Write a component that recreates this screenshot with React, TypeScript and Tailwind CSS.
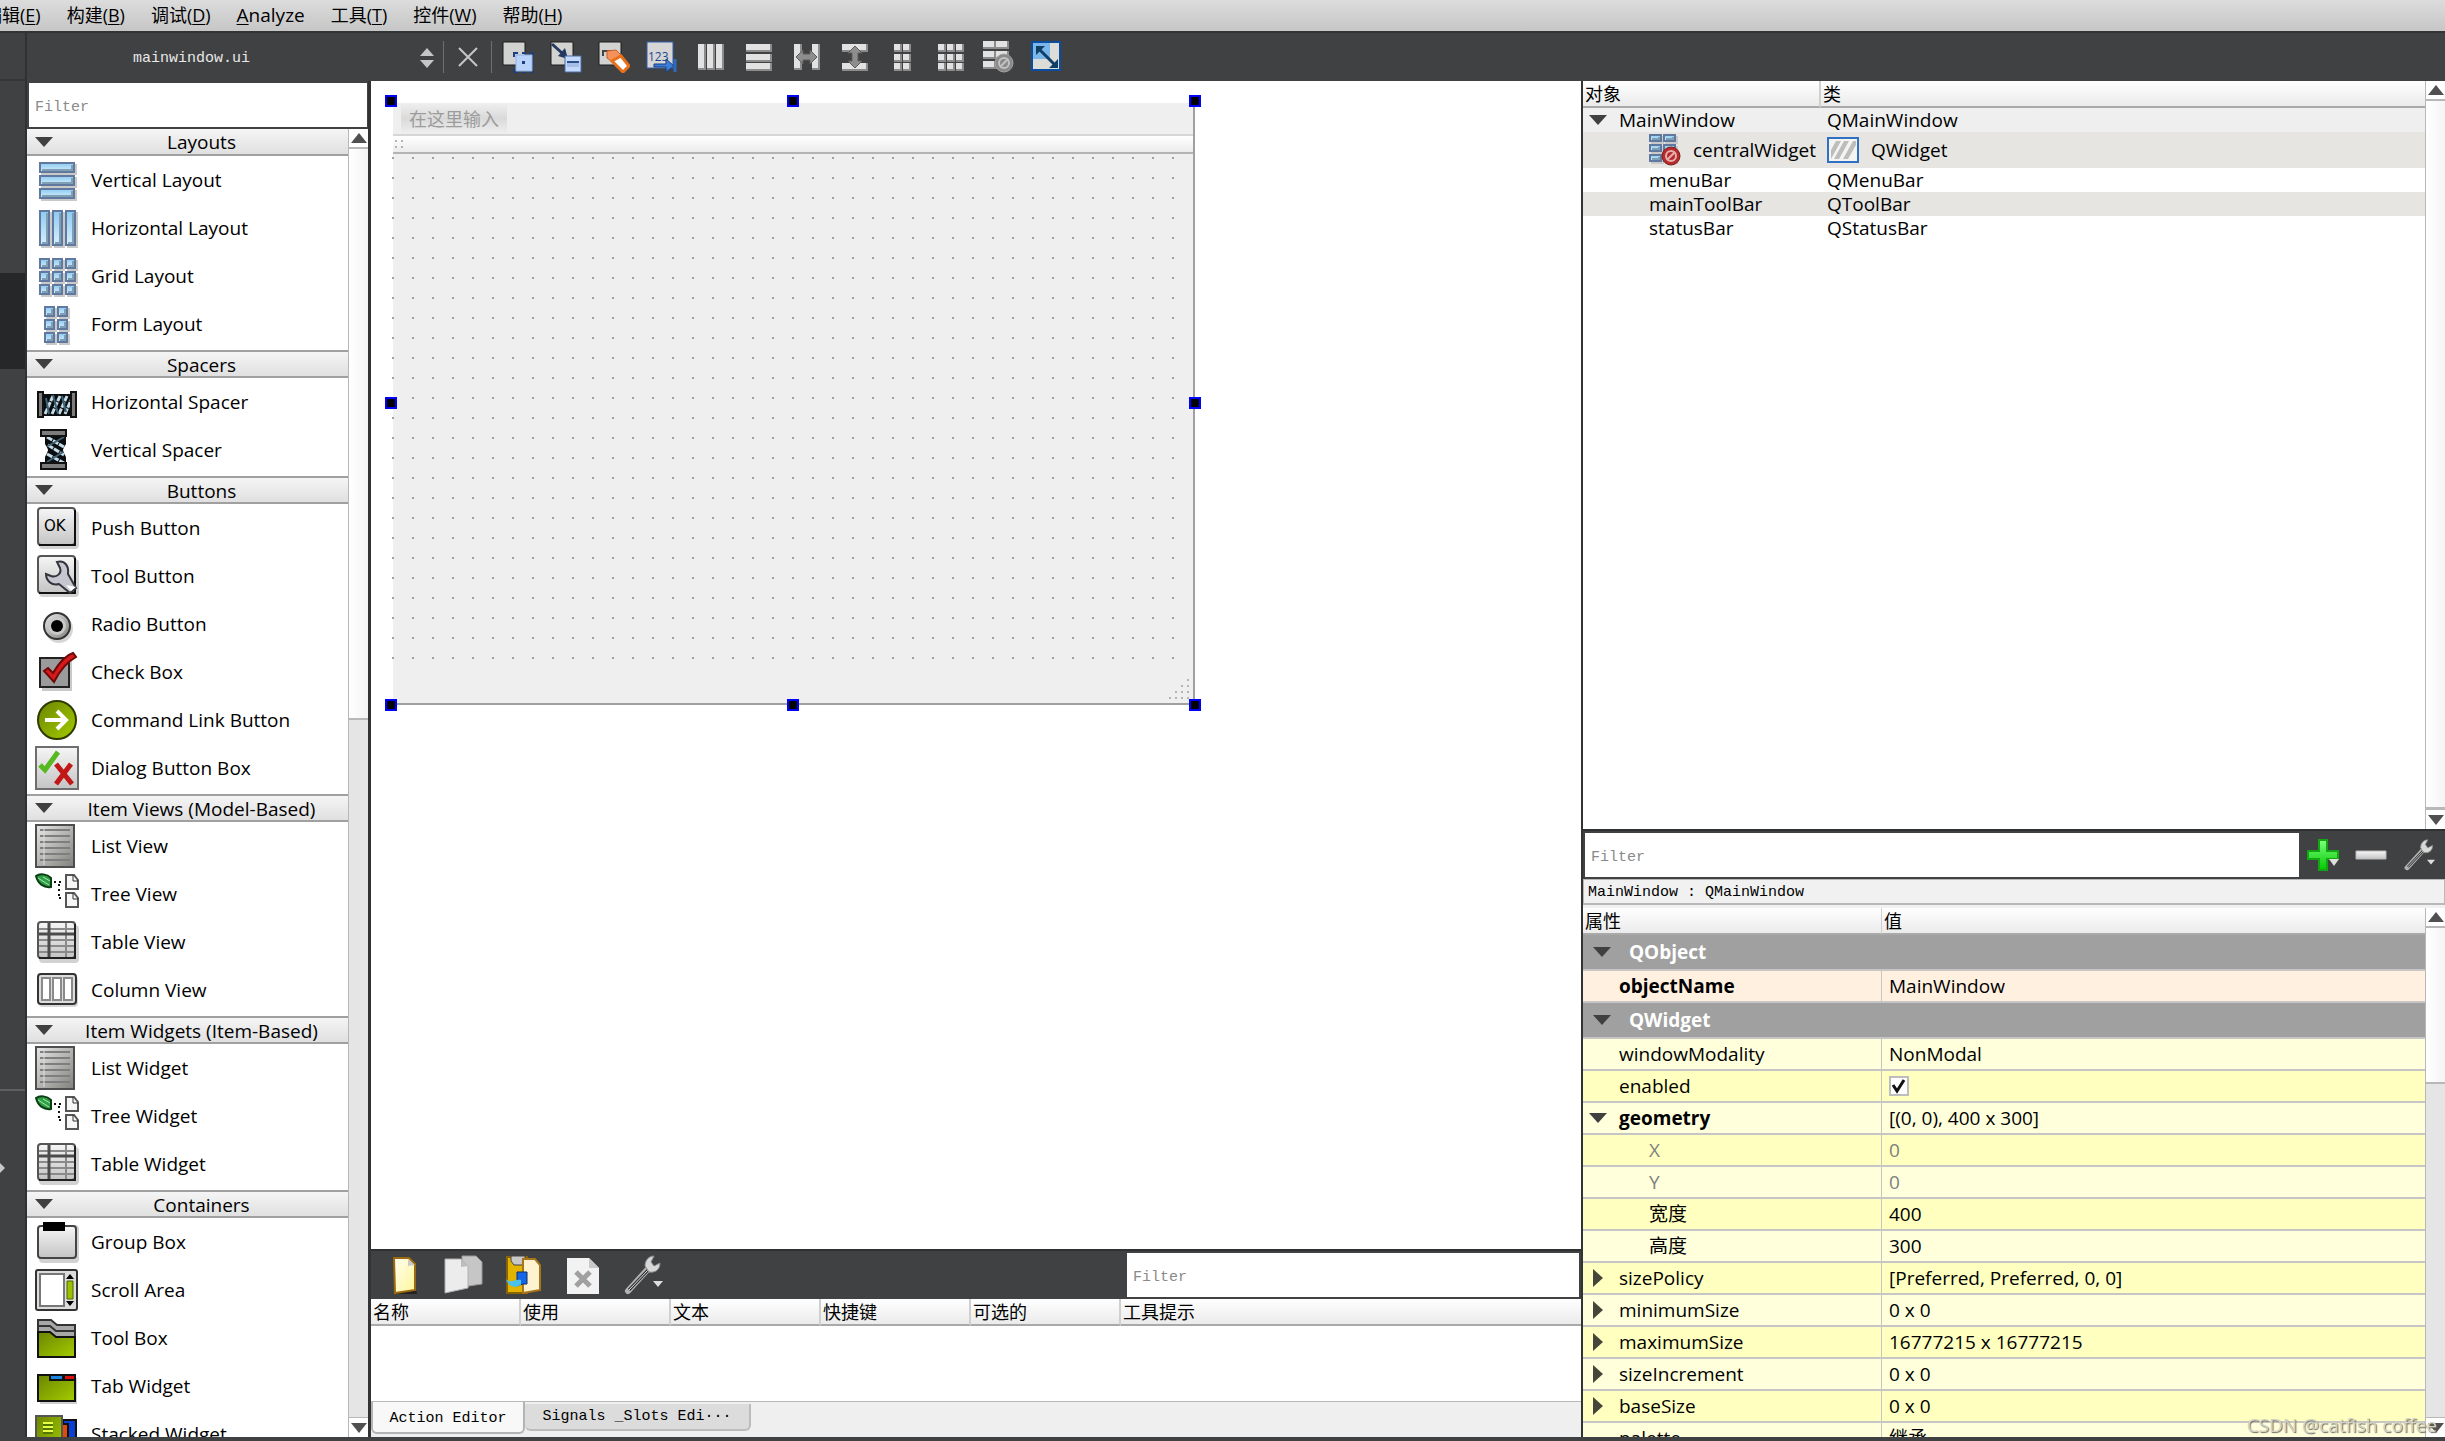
import type { ReactNode } from "react";

const MENUS = [
  { text: "编辑", key: "E" },
  { text: "构建", key: "B" },
  { text: "调试", key: "D" },
  { text: "", key: "A", rest: "nalyze" },
  { text: "工具", key: "T" },
  { text: "控件", key: "W" },
  { text: "帮助", key: "H" },
];

const PALETTE = [
  { title: "Layouts", items: ["Vertical Layout", "Horizontal Layout", "Grid Layout", "Form Layout"] },
  { title: "Spacers", items: ["Horizontal Spacer", "Vertical Spacer"] },
  {
    title: "Buttons",
    items: ["Push Button", "Tool Button", "Radio Button", "Check Box", "Command Link Button", "Dialog Button Box"],
  },
  { title: "Item Views (Model-Based)", items: ["List View", "Tree View", "Table View", "Column View"] },
  { title: "Item Widgets (Item-Based)", items: ["List Widget", "Tree Widget", "Table Widget"] },
  { title: "Containers", items: ["Group Box", "Scroll Area", "Tool Box", "Tab Widget", "Stacked Widget"] },
];

const PROPERTIES = [
  { name: "windowModality", value: "NonModal" },
  { name: "enabled", check: true },
  { name: "geometry", value: "[(0, 0), 400 x 300]", open: true, bold: true },
  { name: "X", value: "0", child: true, muted: true },
  { name: "Y", value: "0", child: true, muted: true },
  { name: "宽度", value: "400", child: true },
  { name: "高度", value: "300", child: true },
  { name: "sizePolicy", value: "[Preferred, Preferred, 0, 0]", closed: true },
  { name: "minimumSize", value: "0 x 0", closed: true },
  { name: "maximumSize", value: "16777215 x 16777215", closed: true },
  { name: "sizeIncrement", value: "0 x 0", closed: true },
  { name: "baseSize", value: "0 x 0", closed: true },
  { name: "palette", value: "继承" },
];

const HEAD = "h-[27px] border-b-2 border-[#a9a9a9] bg-linear-to-b from-white to-[#ebebeb] p-0 pt-px pl-[2px] text-left text-[18px] leading-6 font-normal";

export default function App() {
  return (
    <div className="relative flex h-screen flex-col overflow-hidden bg-[#404142] font-['Open_Sans','Noto_Sans_CJK_SC',sans-serif] text-[19px] leading-6 text-black">
      <Gradients />
      <MenuBar />
      <div className="flex min-h-0 flex-1">
        <ModeStrip />
        <div className="flex min-w-0 flex-1 flex-col">
          <ToolBar />
          <div className="flex min-h-0 flex-1">
            <WidgetBox />
            <main className="flex min-w-0 flex-1 flex-col border-l-[3px] border-[#323334]">
              <FormCanvas />
              <ActionEditor />
            </main>
            <aside className="flex w-[864px] shrink-0 flex-col border-l-2 border-[#323334]">
              <ObjectInspector />
              <PropertyEditor />
            </aside>
          </div>
        </div>
      </div>
      <div className="h-1 shrink-0 bg-[#404142]" />
      <p className="absolute right-2 bottom-1 text-[19px] text-[#d4d4c4] [text-shadow:1px_1px_1px_#6a6a60]">
        CSDN @catfish coffee
      </p>
    </div>
  );
}

function MenuBar() {
  return (
    <nav className="flex h-[33px] shrink-0 gap-[26px] border-b-2 border-[#323334] bg-linear-to-b from-[#dcdcdc] to-[#c6c6c6] text-[18px]">
      {MENUS.map((m) => (
        <button key={m.key} className="flex h-[30px] items-center whitespace-nowrap first:-ml-4">
          {m.text}
          {m.rest ? (
            <span className="text-[19px]">
              <u className="underline-offset-2">{m.key}</u>
              {m.rest}
            </span>
          ) : (
            <span>
              (<u className="underline-offset-2">{m.key}</u>)
            </span>
          )}
        </button>
      ))}
    </nav>
  );
}

function ModeStrip() {
  return (
    <div className="flex w-[27px] shrink-0 flex-col border-r-2 border-[#303132]">
      <div className="h-12 border-b-2 border-[#343536]" />
      <div className="h-48" />
      <div className="h-24 bg-[#262728]" />
      <div className="h-[722px] border-b-2 border-[#5e5f60]" />
      <svg viewBox="0 0 6 12" className="mt-[71px] h-3 w-[6px]">
        <path d="M0 1 5 6 0 11z" fill="#c8c8c8" />
      </svg>
    </div>
  );
}

function ToolBar() {
  return (
    <div className="flex h-12 shrink-0 items-center">
      <div className="relative">
        <select
          aria-label="Open document"
          className="h-12 w-[414px] appearance-none bg-transparent pt-1 pl-[106px] font-['Liberation_Mono',monospace] text-[15px] text-[#e8e8e8]"
        >
          <option>mainwindow.ui</option>
        </select>
        <svg viewBox="0 0 14 22" className="pointer-events-none absolute top-[14px] left-[393px] h-[22px] w-[14px]">
          <path d="M0 9 7 1 14 9zM0 13 7 21 14 13z" fill="#c6c6c6" />
        </svg>
      </div>
      <span className="ml-[2px] h-8 w-px bg-[#6e6f70]" />
      <button aria-label="Close document" className="grid h-12 w-[47px] place-items-center">
        <svg viewBox="0 0 20 20" className="size-5">
          <path d="M1 1 19 19M19 1 1 19" stroke="#c6c6c6" strokeWidth="2" />
        </svg>
      </button>
      <span className="mr-[2px] h-8 w-px bg-[#6e6f70]" />
      {TOOLS.map((t) => (
        <button key={t.label} aria-label={t.label} className="grid size-12 place-items-center">
          <svg viewBox="0 0 32 32" className="size-8">
            {t.icon}
          </svg>
        </button>
      ))}
    </div>
  );
}

function WidgetBox() {
  return (
    <div className="flex w-[341px] shrink-0 flex-col">
      <div className="h-12 shrink-0 p-[2px] pr-px">
        <Filter label="Filter widgets" />
      </div>
      <div className="flex min-h-0 flex-1 bg-white">
        <div className="min-w-0 flex-1 overflow-hidden">
          {PALETTE.map((group, i) => (
            <section key={group.title}>
              <div className={i === 0 ? "h-[27px]" : "h-[30px] pt-[2px]"}>
                <button
                  className={
                    "flex w-full items-center border-b-2 border-[#a0a0a0] bg-linear-to-b from-[#f5f5f5] to-[#e0e0e0] pl-2 " +
                    (i === 0 ? "h-[27px]" : "h-7 border-t-2")
                  }
                >
                  <Down />
                  <span className="flex-1 pt-px pl-[2px]">{group.title}</span>
                </button>
              </div>
              {group.items.map((name) => (
                <button key={name} className="flex h-12 w-full items-center gap-3 pl-2 text-left">
                  <svg viewBox="0 0 44 44" className="size-11">
                    {WIDGET_ICONS[name] ?? WIDGET_ICONS[name.replace("Widget", "View")]}
                  </svg>
                  <span>{name}</span>
                </button>
              ))}
            </section>
          ))}
        </div>
        <ScrollBar thumb={45} />
      </div>
    </div>
  );
}

function FormCanvas() {
  return (
    <div className="min-h-0 flex-1 bg-white px-[22px] pt-[22px]">
      <div className="relative flex h-[602px] w-[802px] flex-col border-r-2 border-b-2 border-[#a0a0a0] bg-[#efefef]">
        <div className="flex h-[33px] shrink-0 border-b-2 border-[#d6d6d6] pl-2">
          <button className="h-[31px] w-[106px] bg-linear-to-b from-[#efefef] via-[#dadada] to-[#efefef] text-[18px] text-[#9c9c9c]">
            在这里输入
          </button>
        </div>
        <div className="h-[18px] shrink-0 border-b-2 border-[#b4b4b4] bg-linear-to-b from-white to-[#ececec] pt-1">
          <div className="ml-[2px] h-3 w-[9px] bg-[conic-gradient(from_270deg_at_2px_2px,#b4b4b4_90deg,transparent_0)] bg-[length:6px_6px]" />
        </div>
        <div className="mt-[3px] ml-[-1px] h-[502px] w-[783px] bg-[conic-gradient(from_270deg_at_2px_2px,#a0a0a0_90deg,transparent_0)] bg-[length:20px_20px]" />
        <svg viewBox="0 0 20 20" className="absolute right-1 bottom-1 size-5" fill="#b4b4b4">
          <path d="M18 0h2v2h-2zM12 6h2v2h-2zM18 6h2v2h-2zM6 12h2v2H6zM12 12h2v2h-2zM18 12h2v2h-2zM0 18h2v2H0zM6 18h2v2H6zM12 18h2v2h-2zM18 18h2v2h-2z" />
        </svg>
        <Handle place="-top-2 -left-2" />
        <Handle place="-top-2 left-1/2 -ml-[6px]" />
        <Handle place="-top-2 -right-2" />
        <Handle place="top-1/2 -mt-[6px] -left-2" />
        <Handle place="top-1/2 -mt-[6px] -right-2" />
        <Handle place="-bottom-2 -left-2" />
        <Handle place="-bottom-2 left-1/2 -ml-[6px]" />
        <Handle place="-bottom-2 -right-2" />
      </div>
    </div>
  );
}

function Handle({ place }: { place: string }) {
  return <span className={"absolute size-3 border-2 border-[#0000ff] bg-black " + place} />;
}

function ActionEditor() {
  return (
    <div className="flex h-[188px] shrink-0 flex-col">
      <div className="flex h-[50px] shrink-0 items-center border-t-2 border-[#303132] pl-[2px]">
        {ACTIONS.map((a) => (
          <button key={a.label} aria-label={a.label} className="grid h-12 w-[60px] place-items-center">
            <svg viewBox="0 0 44 40" className="h-10 w-11">
              {a.icon}
            </svg>
          </button>
        ))}
        <div className="mr-[2px] ml-auto h-11 w-[452px]">
          <Filter label="Filter actions" />
        </div>
      </div>
      <div className="flex-1 bg-white">
        <table className="w-full table-fixed border-separate border-spacing-0">
          <thead>
            <tr>
              {["名称", "使用", "文本", "快捷键", "可选的"].map((h) => (
                <th key={h} className={HEAD + " w-[150px] border-r-2 border-r-[#d0d0d0]"}>
                  {h}
                </th>
              ))}
              <th className={HEAD}>工具提示</th>
            </tr>
          </thead>
        </table>
      </div>
      <div className="flex h-9 shrink-0 items-start border-t border-[#b8b8b8] bg-[#efefef] font-['Liberation_Mono',monospace] text-[15px]">
        <button className="h-8 w-[154px] rounded-b-md border-x-2 border-b-2 border-[#b4b4b4] bg-[#f8f8f8] pt-1">
          Action Editor
        </button>
        <button className="mt-[2px] h-[27px] w-[226px] rounded-b-md border-r-2 border-b-2 border-[#bcbcbc] bg-[#dcdcdc] leading-5">
          Signals _Slots Edi···
        </button>
      </div>
    </div>
  );
}

function ObjectInspector() {
  return (
    <div className="flex min-h-0 flex-1 bg-white">
      <div className="min-w-0 flex-1">
        <table className="w-full table-fixed border-separate border-spacing-0">
          <thead>
            <tr>
              <th className={HEAD + " w-[238px] border-r-2 border-r-[#d0d0d0]"}>对象</th>
              <th className={HEAD}>类</th>
            </tr>
          </thead>
          <tbody>
            <tr className="h-6 bg-[#efefef]">
              <td className="p-0">
                <div className="flex items-center gap-3 pl-[6px]">
                  <Down />
                  MainWindow
                </div>
              </td>
              <td className="p-0 pl-[6px]">QMainWindow</td>
            </tr>
            <tr className="h-9 bg-[#e6e5e1]">
              <td className="p-0">
                <div className="flex items-center gap-3 pl-[66px]">
                  <svg viewBox="0 0 32 32" className="size-8 shrink-0">
                    <Tiles cols={[0, 14]} rows={[0, 10, 20]} w={13} h={8} />
                    <circle cx="22" cy="22" r="9" fill="#b82b2b" stroke="#7d1f1f" />
                    <circle cx="22" cy="22" r="5" fill="none" stroke="#e6b0b0" strokeWidth="2" />
                    <path d="M18 26 26 18" stroke="#e6b0b0" strokeWidth="2" />
                  </svg>
                  centralWidget
                </div>
              </td>
              <td className="p-0">
                <div className="flex items-center gap-3 pl-[6px]">
                  <svg viewBox="0 0 32 26" className="h-[26px] w-8">
                    <path d="M1 1H31V25H1z" fill="#f4f4f2" stroke="#2f6fc4" strokeWidth="2" />
                    <path d="M4 13 9 4h5L4 22zM7 22 17 4h5L12 22zM16 22 26 4h3v4l-8 14z" fill="#bdbdbb" />
                  </svg>
                  QWidget
                </div>
              </td>
            </tr>
            {["menuBar", "mainToolBar", "statusBar"].map((name, i) => (
              <tr key={name} className={i === 1 ? "h-6 bg-[#e6e5e1]" : "h-6"}>
                <td className="p-0 pl-[66px]">{name}</td>
                <td className="p-0 pl-[6px]">{["QMenuBar", "QToolBar", "QStatusBar"][i]}</td>
              </tr>
            ))}
          </tbody>
        </table>
      </div>
      <ScrollBar thumb={100} />
    </div>
  );
}

function PropertyEditor() {
  return (
    <div className="flex h-[608px] shrink-0 flex-col">
      <div className="flex h-[50px] shrink-0 items-center border-t-2 border-[#303132] px-[2px]">
        <div className="h-11 flex-1">
          <Filter label="Filter properties" />
        </div>
        <button aria-label="Add dynamic property" className="grid h-12 w-12 place-items-center">
          <svg viewBox="0 0 32 32" className="size-8">
            <path d="M12 1h8v11h11v8H20v11h-8V20H1v-8h11z" fill="url(#green)" stroke="#14a514" strokeWidth="2" />
            <path d="M22 20h10l-5 7z" fill="#dedede" />
          </svg>
        </button>
        <button aria-label="Remove dynamic property" className="grid h-12 w-12 place-items-center">
          <svg viewBox="0 0 32 32" className="size-8">
            <path d="M1 12H31V20H1z" fill="url(#silver)" stroke="#b8b8b8" />
          </svg>
        </button>
        <button aria-label="Configure" className="grid h-12 w-12 place-items-center">
          <svg viewBox="0 0 44 40" className="h-8 w-9">
            <Wrench />
          </svg>
        </button>
      </div>
      <div className="shrink-0 bg-[#f1f1f1] pb-[3px]">
        <div className="h-[26px] border border-b-2 border-[#b8b8b8] pt-[3px] pl-1 font-['Liberation_Mono',monospace] text-[15px] leading-5">
          MainWindow : QMainWindow
        </div>
      </div>
      <div className="flex min-h-0 flex-1 bg-white">
        <div className="min-w-0 flex-1 overflow-hidden">
          <table className="w-full table-fixed border-separate border-spacing-0">
            <thead>
              <tr>
                <th className={HEAD + " w-[299px] border-r border-r-[#d0d0d0]"}>属性</th>
                <th className={HEAD}>值</th>
              </tr>
            </thead>
            <tbody>
              <GroupRow name="QObject" />
              <tr className="h-8 bg-[#fff0e0]">
                <td className="border-r border-b-2 border-[#c6c6c6] p-0 pl-9 font-bold">objectName</td>
                <td className="border-b-2 border-[#c6c6c6] p-0 pl-[7px]">MainWindow</td>
              </tr>
              <GroupRow name="QWidget" />
              {PROPERTIES.map((p, i) => (
                <tr
                  key={p.name}
                  className={(i % 2 ? "bg-[#ffffbf]" : "bg-[#ffffdc]") + (p.muted ? " h-8 text-[#808080]" : " h-8")}
                >
                  <td className="border-r border-b-2 border-[#c6c6c6] p-0">
                    <div className={"flex items-center gap-3 " + (p.child ? "pl-[66px]" : "pl-[6px]")}>
                      {p.open && <Down />}
                      {p.closed && (
                        <svg viewBox="0 0 18 18" className="size-[18px]">
                          <path d="M4 0 14 9 4 18z" fill="#45453a" />
                        </svg>
                      )}
                      {!p.open && !p.closed && !p.child && <span className="w-[18px]" />}
                      <span className={p.bold ? "font-bold" : ""}>{p.name}</span>
                    </div>
                  </td>
                  <td className="border-b-2 border-[#c6c6c6] p-0 pl-[7px]">
                    {p.check ? (
                      <label className="grid w-5">
                        <input
                          type="checkbox"
                          defaultChecked
                          aria-label="enabled"
                          className="col-start-1 row-start-1 size-5 appearance-none border-2 border-[#bdbdbd] bg-white"
                        />
                        <svg viewBox="0 0 20 20" className="pointer-events-none col-start-1 row-start-1 size-5">
                          <path d="M4 9 8 15 15 4" fill="none" stroke="#111" strokeWidth="3" />
                        </svg>
                      </label>
                    ) : (
                      p.value
                    )}
                  </td>
                </tr>
              ))}
            </tbody>
          </table>
        </div>
        <ScrollBar thumb={32} />
      </div>
    </div>
  );
}

function GroupRow({ name }: { name: string }) {
  return (
    <tr className="h-9 bg-[#a0a0a0] font-bold text-white">
      <td colSpan={2} className="border-b-2 border-[#c6c6c6] p-0">
        <div className="flex items-center gap-[18px] pl-[10px]">
          <Down />
          {name}
        </div>
      </td>
    </tr>
  );
}

function Filter({ label }: { label: string }) {
  return (
    <input
      aria-label={label}
      placeholder="Filter"
      className="block h-full w-full bg-white px-[6px] pt-1 font-['Liberation_Mono',monospace] text-[15px] placeholder:text-[#8a8a8a]"
    />
  );
}

function Down() {
  return (
    <svg viewBox="0 0 18 10" className="h-[10px] w-[18px] shrink-0">
      <path d="M0 0H18L9 10z" fill="#404040" />
    </svg>
  );
}

function ScrollBar({ thumb }: { thumb: number }) {
  return (
    <div className="flex w-5 shrink-0 flex-col border-l border-[#b8b8b8] bg-white">
      <button aria-label="Scroll up" className="grid h-5 shrink-0 place-items-center border-b-2 border-[#b8b8b8]">
        <svg viewBox="0 0 16 10" className="h-[10px] w-4">
          <path d="M0 10 8 0 16 10z" fill="#505050" />
        </svg>
      </button>
      <div className="min-h-0 flex-1 bg-[#e5e5e5]">
        <div className="border-b-2 border-[#b8b8b8] bg-linear-to-r from-white to-[#f4f4f4]" style={{ height: thumb + "%" }} />
      </div>
      <button aria-label="Scroll down" className="grid h-5 shrink-0 place-items-center border-t border-[#b8b8b8]">
        <svg viewBox="0 0 16 10" className="h-[10px] w-4">
          <path d="M0 0H16L8 10z" fill="#505050" />
        </svg>
      </button>
    </div>
  );
}

function Gradients() {
  return (
    <svg className="absolute size-0">
      <defs>
        <linearGradient id="blue" x2="0" y2="1">
          <stop offset="0" stopColor="#8ccbf2" />
          <stop offset="1" stopColor="#d8effc" />
        </linearGradient>
        <linearGradient id="silver" x2="0" y2="1">
          <stop offset="0" stopColor="#f6f6f6" />
          <stop offset="1" stopColor="#c4c4c4" />
        </linearGradient>
        <linearGradient id="steel" x2="1" y2="1">
          <stop offset="0" stopColor="#e8e8e8" />
          <stop offset="1" stopColor="#80807c" />
        </linearGradient>
        <linearGradient id="lime" x2="1" y2="1">
          <stop offset="0" stopColor="#6b8500" />
          <stop offset="1" stopColor="#a4cc00" />
        </linearGradient>
        <linearGradient id="green" x2="0" y2="1">
          <stop offset="0" stopColor="#7dff7d" />
          <stop offset="1" stopColor="#00c800" />
        </linearGradient>
        <linearGradient id="paper" x2="1" y2="1">
          <stop offset="0" stopColor="#fffdf0" />
          <stop offset="1" stopColor="#fff79a" />
        </linearGradient>
      </defs>
    </svg>
  );
}

type Grid = { cols: number[]; rows: number[]; w: number; h: number };

// Blue bevelled tiles of the layout icons
function Tiles({ cols, rows, w, h }: Grid) {
  return rows.flatMap((y) =>
    cols.map((x) => (
      <g key={x + "-" + y}>
        <rect x={x + 2} y={y + 2} width={w} height={h} fill="#c9c9c9" />
        <rect x={x + 1} y={y + 1} width={w - 2} height={h - 2} fill="url(#blue)" stroke="#61799f" strokeWidth="2" />
        <path d={`M${x + 3} ${y + h - 3}H${x + w - 3}V${y + 3}`} fill="none" stroke="#7f9fb4" strokeWidth="2" />
      </g>
    ))
  );
}

// Grey bars of the toolbar layout icons
function Bars({ cols, rows, w, h }: Grid) {
  return rows.flatMap((y) =>
    cols.map((x) => (
      <g key={x + "-" + y}>
        <rect x={x} y={y} width={w} height={h} fill="#8c8c8c" />
        <rect x={x} y={y} width={w - 2} height={h - 2} fill="#e2e2e2" />
      </g>
    ))
  );
}

function Wrench() {
  return (
    <>
      <path d="M7 36 27 14" stroke="#b4b4b4" strokeWidth="6" strokeLinecap="round" />
      <path d="M8 35 27 15" stroke="#303030" strokeWidth="3" />
      <path d="M8 35 27 15" stroke="#e0e0e0" strokeWidth="1" />
      <path d="M24 11c0-6 4-10 9-10l-3 6 3 4 6-3c0 7-5 10-11 9z" fill="#d8d8d8" stroke="#8a8a8a" />
      <path d="M32 26h10l-5 6z" fill="#dedede" />
    </>
  );
}

const BackSheet = <path d="M1 1H23V24H1z" fill="#d2d2d0" stroke="#1c1c1c" />;

const TOOLS: { label: string; icon: ReactNode }[] = [
  {
    label: "Edit Widgets",
    icon: (
      <>
        {BackSheet}
        <path d="M14 14H30V30H14z" fill="#b9d3fb" stroke="#8fb4ee" />
        <path d="M12 16V12h4M20 12h4M28 12h4v4M32 20v4M32 28v4h-4M24 32h-4M16 32h-4v-4" fill="none" stroke="#1d3f80" strokeWidth="2" />
        <path d="M20 20h3v3h-3z" fill="#1d3f80" />
      </>
    ),
  },
  {
    label: "Edit Signals/Slots",
    icon: (
      <>
        {BackSheet}
        <path d="M2 3 12 12" stroke="#24395f" strokeWidth="3" />
        <path d="M18 18 8 15 15 7z" fill="#24395f" />
        <path d="M15 15H31V31H15z" fill="#c4dafd" stroke="#4a6ca8" />
        <path d="M17 21H29V26H17z" fill="#a6bfe8" />
        <path d="M17 21H29" stroke="#2c4f8e" strokeWidth="2" />
      </>
    ),
  },
  {
    label: "Edit Buddies",
    icon: (
      <>
        {BackSheet}
        <path d="M5 15v-5h9" fill="none" stroke="#444" strokeWidth="2" />
        <path d="M9 10 18 9 25 16 16 22 9 17z" fill="#f5915a" stroke="#c85f20" />
        <path d="M14 20 23 15 31 25 25 31z" fill="#fff" stroke="#e8701a" strokeWidth="3" />
      </>
    ),
  },
  {
    label: "Edit Tab Order",
    icon: (
      <>
        <path d="M1 1H27V27H1z" fill="#d6d6d6" stroke="#345fa8" />
        <text x="2" y="20" fontSize="12" fontFamily="Open Sans" fill="#1b4791">
          123
        </text>
        <path d="M8 23h12v-5l8 7-8 6v-5H8z" fill="#3e7fd6" stroke="#173f83" />
        <path d="M29 18v13" stroke="#2e6cc2" strokeWidth="3" />
      </>
    ),
  },
  { label: "Lay Out Horizontally", icon: <Bars cols={[4, 13, 22]} rows={[3]} w={8} h={26} /> },
  { label: "Lay Out Vertically", icon: <Bars cols={[4]} rows={[3, 13, 22]} w={26} h={8} /> },
  {
    label: "Horizontal Splitter",
    icon: (
      <>
        <Bars cols={[4, 22]} rows={[3]} w={8} h={26} />
        <path d="M6 16 13 9v4h7V9l7 7-7 7v-4h-7v4z" fill="#8e8e8e" stroke="#5c5c5c" />
      </>
    ),
  },
  {
    label: "Vertical Splitter",
    icon: (
      <>
        <Bars cols={[4]} rows={[3, 22]} w={26} h={8} />
        <path d="M17 5 24 12h-4v8h4l-7 7-7-7h4v-8h-4z" fill="#8e8e8e" stroke="#5c5c5c" />
      </>
    ),
  },
  { label: "Lay Out in a Form", icon: <Bars cols={[8, 17]} rows={[3, 13, 22]} w={8} h={8} /> },
  { label: "Lay Out in a Grid", icon: <Bars cols={[4, 13, 22]} rows={[3, 13, 22]} w={8} h={8} /> },
  {
    label: "Break Layout",
    icon: (
      <>
        <Bars cols={[1, 14]} rows={[0, 10, 20]} w={13} h={8} />
        <circle cx="22" cy="22" r="9" fill="#8a8a8a" stroke="#a2a2a2" />
        <circle cx="22" cy="22" r="5" fill="none" stroke="#c2c2c2" strokeWidth="2" />
        <path d="M18 26 26 18" stroke="#c2c2c2" strokeWidth="2" />
      </>
    ),
  },
  {
    label: "Adjust Size",
    icon: (
      <>
        <path d="M2 1H30V29H2z" fill="#dcdcd8" stroke="#0b4da0" strokeWidth="2" />
        <path d="M3 2H20V18H3z" fill="#79b7ea" />
        <path d="M10 9 24 23" stroke="#103f66" strokeWidth="3" />
        <path d="M6 5h9l-9 9zM28 27h-9l9-9z" fill="#103f66" />
      </>
    ),
  },
];

const ACTIONS: { label: string; icon: ReactNode }[] = [
  {
    label: "New action",
    icon: (
      <>
        <path d="M14 39h22l-1-4z" fill="#222" />
        <path d="M13 3h15l6 6v26l-20 3z" fill="url(#paper)" stroke="#9a6a10" strokeWidth="2" />
        <path d="M27 4v7l7-1z" fill="#c9c9c9" />
      </>
    ),
  },
  {
    label: "Copy action",
    icon: (
      <>
        <path d="M21 1h14l6 6v22l-20 3z" fill="#c6c6c6" stroke="#9a9a9a" />
        <path d="M4 4h16l7 7v22L4 38z" fill="#ececec" stroke="#b0b0b0" />
        <path d="M20 4v8l7-1z" fill="#bdbdbd" />
      </>
    ),
  },
  {
    label: "Paste action",
    icon: (
      <>
        <path d="M6 2h20v36H6z" fill="#e2b400" stroke="#8a6400" strokeWidth="2" />
        <path d="M10 1h14v5l-3 4h-8l-3-4z" fill="#c8c8c8" stroke="#444" />
        <path d="M22 4h12l5 6v25l-17 3z" fill="#fff3cf" stroke="#a8761a" strokeWidth="2" />
        <path d="M16 17h10v12h-4l-6 2z" fill="#1467e8" stroke="#0c2f66" />
        <path d="M5 24c5 5 8 0 15 1v5c-8 4-13 1-15-6z" fill="#4cc2e8" />
      </>
    ),
  },
  {
    label: "Delete action",
    icon: (
      <>
        <path d="M6 3h22l10 10v26H6z" fill="#f2f2f2" />
        <path d="M28 3v10h10z" fill="#c9c9c9" />
        <path d="M15 17 29 31M29 17 15 31" stroke="#a0a0a0" strokeWidth="5" />
      </>
    ),
  },
  { label: "Configure actions", icon: <Wrench /> },
];

const Shadow = <rect x="4" y="5" width="40" height="38" rx="4" fill="#d2d2d2" />;

const WIDGET_ICONS: Record<string, ReactNode> = {
  "Vertical Layout": <Tiles cols={[4]} rows={[4, 17, 30]} w={36} h={11} />,
  "Horizontal Layout": <Tiles cols={[4, 17, 30]} rows={[4]} w={11} h={36} />,
  "Grid Layout": <Tiles cols={[4, 17, 30]} rows={[4, 17, 30]} w={11} h={11} />,
  "Form Layout": <Tiles cols={[9, 22]} rows={[4, 17, 30]} w={11} h={11} />,
  "Horizontal Spacer": (
    <>
      <path d="M8 14H37V36H8z" fill="#0a0d10" />
      <path d="M10 34 18 16M17 34 25 16M24 34 32 16M30 34 36 20" stroke="#c4dbe8" strokeWidth="3" strokeDasharray="6 1" />
      <path d="M11 18 14 34M18 15 23 34M27 16 31 32" stroke="#3f6375" strokeWidth="2" />
      <path d="M3 12H8V37H3zM36 12H41V37H36z" fill="#7c7c7c" stroke="#111" strokeWidth="2" />
    </>
  ),
  "Vertical Spacer": (
    <>
      <path d="M10 8H31V36H10z" fill="#0a0d10" />
      <path d="M9 12c0 4 4 8 4 10s-3 6-4 10zM32 12c0 4-4 8-4 10s3 6 4 10z" fill="#fff" />
      <path d="M12 9 29 19M13 17 29 27M12 26 29 35" stroke="#c4dbe8" strokeWidth="3" strokeDasharray="6 1" />
      <path d="M29 9 13 18M28 24 12 34" stroke="#3f6375" strokeWidth="2" />
      <path d="M6 2H31V8H6zM6 35H31V41H6z" fill="#7c7c7c" stroke="#111" strokeWidth="2" />
    </>
  ),
  "Push Button": (
    <>
      {Shadow}
      <rect x="3" y="2" width="37" height="37" rx="3" fill="url(#silver)" stroke="#555" strokeWidth="2" />
      <path d="M4 39H40V4" fill="none" stroke="#111" strokeWidth="2" />
      <text x="9" y="25" fontSize="15" fontFamily="DejaVu Sans" fill="#000">
        OK
      </text>
    </>
  ),
  "Tool Button": (
    <>
      {Shadow}
      <rect x="3" y="2" width="37" height="37" rx="3" fill="url(#silver)" stroke="#555" strokeWidth="2" />
      <path d="M4 39H40V4" fill="none" stroke="#111" strokeWidth="2" />
      <path
        d="M22 8c8-2 12 4 11 12l8 14-6 5-11-9c-7 2-13-3-13-10l5 2c6 2 11-3 9-8z"
        fill="#c6c6d0"
        stroke="#33343c"
        strokeWidth="2"
      />
      <path d="M31 31 36 37 41 33z" fill="#fff" />
    </>
  ),
  "Radio Button": (
    <>
      <circle cx="24" cy="27" r="14" fill="#d6d6d6" />
      <circle cx="22" cy="24" r="13" fill="url(#steel)" stroke="#333" strokeWidth="2" />
      <circle cx="22" cy="24" r="9" fill="#c9c9c9" />
      <circle cx="22" cy="24" r="6" fill="#000" />
    </>
  ),
  "Check Box": (
    <>
      <path d="M7 10H37V41H7z" fill="#c9c9c9" />
      <path d="M5 8H34V37H5z" fill="#9b9b9b" stroke="#222" strokeWidth="2" />
      <path d="M9 21 13 18 18 23C24 13 31 5 38 3l3 4C32 12 24 22 19 32z" fill="#d61a1a" stroke="#6d0808" strokeWidth="2" />
    </>
  ),
  "Command Link Button": (
    <>
      <circle cx="22" cy="22" r="19" fill="url(#lime)" stroke="#2e3a00" strokeWidth="2" />
      <path d="M10 22H31M22 13 31 22 22 31" fill="none" stroke="#fff" strokeWidth="4" />
    </>
  ),
  "Dialog Button Box": (
    <>
      <path d="M1 1H43V43H1z" fill="url(#silver)" stroke="#6e6e6e" strokeWidth="2" />
      <path d="M5 19 10 24 23 6" fill="none" stroke="#58b820" strokeWidth="5" />
      <path d="M21 18 37 38M36 18 21 38" stroke="#c21717" strokeWidth="5" />
    </>
  ),
  "List View": (
    <>
      <path d="M1 1H39V43H1z" fill="url(#steel)" stroke="#4e4e4e" strokeWidth="2" />
      <path d="M5 6h30M5 12h30M5 18h30M5 24h30M5 30h30M5 36h30" stroke="#7e7e7e" strokeWidth="2" />
      <path d="M9 4v37" stroke="#dedede" />
    </>
  ),
  "Tree View": (
    <>
      <path d="M1 4c4-3 11-2 15 2v9C9 16 3 12 1 4z" fill="#2ea043" stroke="#0d3d16" strokeWidth="2" />
      <path d="M3 6 14 13M8 5 15 9" stroke="#a8e6b0" strokeWidth="1" />
      <path d="M19 10H29M24 12V26M24 26H29" fill="none" stroke="#111" strokeWidth="2" strokeDasharray="2 3" />
      <path d="M31 3h8l4 5v9H31zM31 21h8l4 5v9H31z" fill="#f6f6f6" stroke="#555" strokeWidth="2" />
      <path d="M38 3v6h5M38 21v6h5" fill="none" stroke="#333" />
    </>
  ),
  "Table View": (
    <>
      {Shadow}
      <rect x="3" y="2" width="37" height="36" rx="3" fill="url(#silver)" stroke="#555" strokeWidth="2" />
      <path d="M4 9H39M4 20H39M4 26H39M4 32H39M31 3V38" stroke="#8a8a8a" strokeWidth="2" />
      <path d="M4 14H39M14 3V38" stroke="#4c4c4c" strokeWidth="3" />
      <path d="M4 38H40V4" fill="none" stroke="#222" strokeWidth="2" />
    </>
  ),
  "Column View": (
    <>
      <rect x="4" y="8" width="39" height="31" rx="4" fill="#d6d6d6" />
      <rect x="3" y="6" width="38" height="30" rx="3" fill="#dcdcdc" stroke="#333" strokeWidth="2" />
      <path d="M7 10H15V32H7zM18 10H26V32H18zM29 10H37V32H29z" fill="#fff" stroke="#8a8a8a" strokeWidth="2" />
    </>
  ),
  "Group Box": (
    <>
      {Shadow}
      <rect x="3" y="6" width="38" height="32" rx="3" fill="url(#silver)" stroke="#444" strokeWidth="2" />
      <path d="M8 2H30V11H8z" fill="#000" />
    </>
  ),
  "Scroll Area": (
    <>
      <rect x="1" y="2" width="41" height="40" rx="2" fill="#dcdcdc" stroke="#333" strokeWidth="2" />
      <path d="M5 6H29V38H5z" fill="#fff" stroke="#777" strokeWidth="2" />
      <path d="M32 13H38V31H32z" fill="#9ac000" stroke="#4f6600" />
      <path d="M31 11 35 6 39 11zM31 33 35 38 39 33z" fill="#000" />
    </>
  ),
  "Tool Box": (
    <>
      <path d="M3 4H16L22 9H40V22H3z" fill="#a8a8a8" stroke="#333" strokeWidth="2" />
      <path d="M3 10H15L21 15H40" fill="none" stroke="#333" strokeWidth="2" />
      <path d="M3 16H15L21 21H40V41H3z" fill="url(#lime)" stroke="#111" strokeWidth="2" />
    </>
  ),
  "Tab Widget": (
    <>
      <path d="M5 14H42V40H5z" fill="#cfcfcf" />
      <path d="M3 11H40V37H3z" fill="url(#lime)" stroke="#111" strokeWidth="2" />
      <path d="M15 11H28V16H15z" fill="#1b86e0" stroke="#111" strokeWidth="2" />
      <path d="M29 11H40V16H29z" fill="#e01010" stroke="#111" strokeWidth="2" />
    </>
  ),
  "Stacked Widget": (
    <>
      <path d="M28 8H41V43H28z" fill="#0a3fd0" stroke="#111" strokeWidth="2" />
      <path d="M24 12H33V43H24z" fill="#e04a10" stroke="#111" strokeWidth="2" />
      <path d="M1 4H27V43H1z" fill="url(#lime)" stroke="#555" strokeWidth="2" />
      <path d="M8 11H18M8 15H18M8 19H18" stroke="#e6ff4a" strokeWidth="2" />
      <path d="M8 13H18M8 17H18M8 21H18" stroke="#234d00" />
    </>
  ),
};
